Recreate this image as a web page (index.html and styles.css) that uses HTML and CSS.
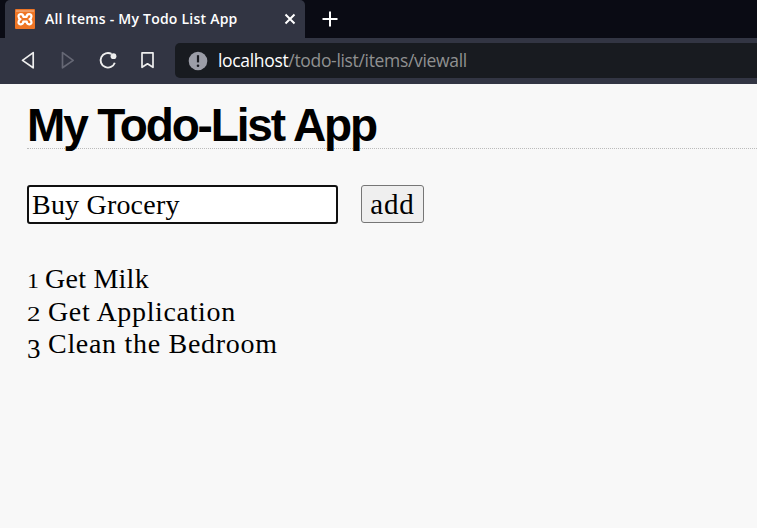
FILE: index.html
```html
<!DOCTYPE html>
<html lang="en">
<head>
<meta charset="utf-8">
<title>All Items - My Todo List App</title>
<link rel="stylesheet" href="styles.css">
</head>
<body>
<header class="browser">
  <div class="tabs">
    <div class="tab">
      <svg class="favicon" width="20" height="20" viewBox="0 0 20 20"><rect width="20" height="20" rx="1" fill="#ee7525"/><path d="M1 1h18v2H1z" fill="#f09a60"/><path d="M8.300 7.800C8.300 4.200 3.500 4.400 3.500 7.200Q3.500 9.300 5.500 10.200Q3.500 11 3.500 13.200C3.500 16 8.300 16.200 8.300 12.600H11.700C11.700 16.200 16.500 16 16.500 13.200Q16.500 11 14.500 10.200Q16.500 9.300 16.500 7.200C16.500 4.400 11.700 4.200 11.700 7.800z" fill="none" stroke="#fff" stroke-width="2.200" stroke-linejoin="round"/></svg>
      <span class="tab-title">All Items - My Todo List App</span>
      <svg class="close" width="12" height="12" viewBox="0 0 12 12"><path d="M1.500 1.500l9 9M10.500 1.500l-9 9" stroke="#fff" stroke-width="2"/></svg>
    </div>
    <svg class="new-tab" width="16" height="16" viewBox="0 0 16 16"><path d="M8 .5v15M.5 8h15" stroke="#fff" stroke-width="2"/></svg>
  </div>
  <div class="toolbar">
    <svg class="nav" width="156" height="46" viewBox="0 0 156 46" fill="none" stroke="#eee" stroke-width="1.700" stroke-linejoin="round">
      <path d="M33.200 14.600v15.200L22.500 22.400z"/>
      <path d="M62.500 14.600v15.200l10.700-7.400z" stroke="#656774"/>
      <path d="M111.500 15.900a7.300 7.300 0 1 0 3.300 8.800" stroke-width="1.900"/>
      <circle cx="113.500" cy="18.200" r="2.900" fill="#eee" stroke="none"/>
      <path d="M142 14.800h11v14.500l-5.500-3.500-5.500 3.500z"/>
    </svg>
    <div class="address">
      <svg class="info" width="20" height="20" viewBox="0 0 20 20"><circle cx="10" cy="10" r="9.300" fill="#9b9da7"/><path d="M10 4.200v7.200" stroke="#181a20" stroke-width="2.200"/><circle cx="10" cy="14.700" r="1.300" fill="#181a20"/></svg>
      <span class="url"><span class="host">localhost</span>/todo-list/items/viewall</span>
    </div>
  </div>
</header>
<main class="page">
  <h1 class="heading">My Todo-List App</h1>
  <form class="form">
    <input class="field" type="text" value="Buy Grocery">
    <button class="add" type="button">add</button>
  </form>
  <div class="items">
    <div class="item"><span class="num one">1</span><span class="milk">Get Milk</span></div>
    <div class="item"><span class="num two">2</span><span class="application">Get Application</span></div>
    <div class="item"><span class="num three">3</span><span class="bedroom">Clean the Bedroom</span></div>
  </div>
</main>
</body>
</html>
```
FILE: styles.css
```css
* { box-sizing: border-box; }
body { margin: 0; background: #f8f8f8; color: #000; overflow: hidden; font-family: "Liberation Serif", serif; }
svg { display: block; flex: none; }
.browser { height: 84px; background: #323543; font-family: "Open Sans", "Noto Sans", sans-serif; }
.tabs { height: 38px; display: flex; background: #0a0b14; padding-left: 5px; }
.tab { width: 300px; height: 38px; padding: 0 10px; display: flex; align-items: center; background: #323543; border-radius: 5px 5px 0 0; color: #fff; }
.tab-title { flex: 1; margin-left: 10px; font-size: 14px; font-weight: 600; white-space: nowrap; letter-spacing: .23px; position: relative; top: -1px; }
.close { margin-right: -1px; }
.new-tab { margin: 11px 0 0 17px; }
.toolbar { height: 46px; display: flex; }
.address { height: 35px; margin: 5px 0 0 19px; flex: 1; border-radius: 5px 0 0 5px; background: #181b20; display: flex; align-items: center; padding-left: 13px; }
.url { margin-left: 10px; margin-top: -2px; font-family: "Open Sans", sans-serif; font-size: 17.500px; letter-spacing: -.33px; color: #909191; white-space: nowrap; }
.host { color: #fff; }
.page { padding: 17px 0 0 27px; }
.heading { height: 48px; margin: 0; border-bottom: 1px dotted #bbb; font: bold 46px/48px "Liberation Sans", sans-serif; letter-spacing: -2.150px; }
.form { display: flex; gap: 23px; margin-top: 36px; }
.field { width: 311px; height: 39px; border: 2px solid #101010; border-radius: 3px; background: #fff; padding: 0 3px; font: 28px "Liberation Serif", serif; color: #000; outline: none; letter-spacing: .2px; }
.add { width: 63px; height: 38px; border: 1px solid #767676; border-radius: 3px; background: #efefef; padding: 1px 0 0; font: 29px "Liberation Serif", serif; letter-spacing: .9px; color: #000; }
.items { margin-top: 39px; font-size: 28px; line-height: 32.500px; }
.item { display: flex; height: 32.500px; white-space: nowrap; }
.num { font-size: 20px; line-height: 37px; transform-origin: 0 50%; }
.one { width: 18px; transform: scaleX(1.200); }
.two { width: 21px; transform: scaleX(1.350); }
.num.three { width: 21px; font-size: 27px; line-height: 43px; }
.milk { letter-spacing: .25px; }
.application { letter-spacing: .65px; }
.bedroom { letter-spacing: .7px; }
```
